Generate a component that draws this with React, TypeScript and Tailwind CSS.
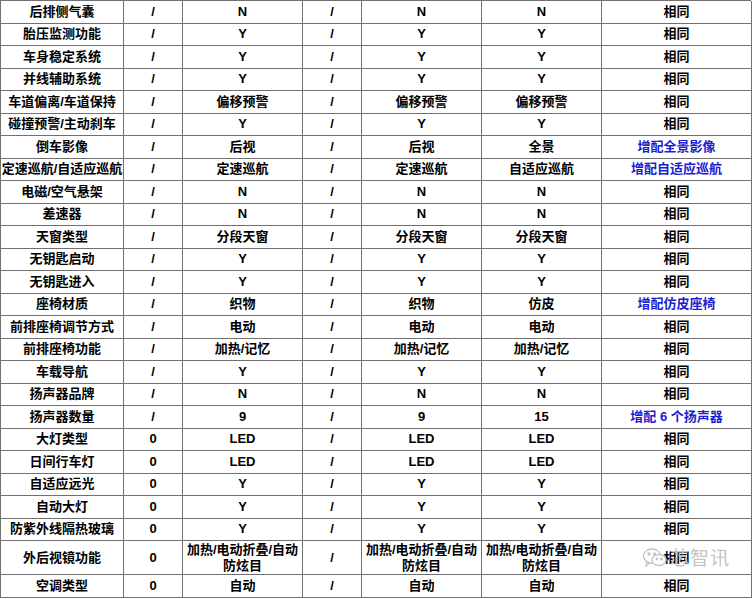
import React from "react";

type Row = {
  label: string;
  a: string;
  b: string;
  c: string;
  d: string;
  e: string;
  f: string;
  g: string;
  blue?: boolean;
  tall?: boolean;
};

const mirror = "加热/电动折叠/自动\n防炫目";

const rows: Row[] = [
  { label: "后排侧气囊", a: "/", b: "N", c: "/", d: "N", e: "N", f: "相同", g: "" },
  { label: "胎压监测功能", a: "/", b: "Y", c: "/", d: "Y", e: "Y", f: "相同", g: "" },
  { label: "车身稳定系统", a: "/", b: "Y", c: "/", d: "Y", e: "Y", f: "相同", g: "" },
  { label: "并线辅助系统", a: "/", b: "Y", c: "/", d: "Y", e: "Y", f: "相同", g: "" },
  { label: "车道偏离/车道保持", a: "/", b: "偏移预警", c: "/", d: "偏移预警", e: "偏移预警", f: "相同", g: "" },
  { label: "碰撞预警/主动刹车", a: "/", b: "Y", c: "/", d: "Y", e: "Y", f: "相同", g: "" },
  { label: "倒车影像", a: "/", b: "后视", c: "/", d: "后视", e: "全景", f: "增配全景影像", g: "", blue: true },
  { label: "定速巡航/自适应巡航", a: "/", b: "定速巡航", c: "/", d: "定速巡航", e: "自适应巡航", f: "增配自适应巡航", g: "", blue: true },
  { label: "电磁/空气悬架", a: "/", b: "N", c: "/", d: "N", e: "N", f: "相同", g: "" },
  { label: "差速器", a: "/", b: "N", c: "/", d: "N", e: "N", f: "相同", g: "" },
  { label: "天窗类型", a: "/", b: "分段天窗", c: "/", d: "分段天窗", e: "分段天窗", f: "相同", g: "" },
  { label: "无钥匙启动", a: "/", b: "Y", c: "/", d: "Y", e: "Y", f: "相同", g: "" },
  { label: "无钥匙进入", a: "/", b: "Y", c: "/", d: "Y", e: "Y", f: "相同", g: "" },
  { label: "座椅材质", a: "/", b: "织物", c: "/", d: "织物", e: "仿皮", f: "增配仿皮座椅", g: "", blue: true },
  { label: "前排座椅调节方式", a: "/", b: "电动", c: "/", d: "电动", e: "电动", f: "相同", g: "" },
  { label: "前排座椅功能", a: "/", b: "加热/记忆", c: "/", d: "加热/记忆", e: "加热/记忆", f: "相同", g: "" },
  { label: "车载导航", a: "/", b: "Y", c: "/", d: "Y", e: "Y", f: "相同", g: "" },
  { label: "扬声器品牌", a: "/", b: "N", c: "/", d: "N", e: "N", f: "相同", g: "" },
  { label: "扬声器数量", a: "/", b: "9", c: "/", d: "9", e: "15", f: "增配 6 个扬声器", g: "", blue: true },
  { label: "大灯类型", a: "0", b: "LED", c: "/", d: "LED", e: "LED", f: "相同", g: "" },
  { label: "日间行车灯", a: "0", b: "LED", c: "/", d: "LED", e: "LED", f: "相同", g: "" },
  { label: "自适应远光", a: "0", b: "Y", c: "/", d: "Y", e: "Y", f: "相同", g: "" },
  { label: "自动大灯", a: "0", b: "Y", c: "/", d: "Y", e: "Y", f: "相同", g: "" },
  { label: "防紫外线隔热玻璃", a: "0", b: "Y", c: "/", d: "Y", e: "Y", f: "相同", g: "" },
  { label: "外后视镜功能", a: "0", b: mirror, c: "/", d: mirror, e: mirror, f: "相同", g: "wm", tall: true },
  { label: "空调类型", a: "0", b: "自动", c: "/", d: "自动", e: "自动", f: "相同", g: "" },
];

const Watermark = () => (
  <div className="pointer-events-none absolute left-[40px] top-[6px] flex items-center gap-[2px] text-[#c4c4c4]">
    <svg width="26" height="22" viewBox="0 0 26 22" fill="none" stroke="#c4c4c4" strokeWidth="1.3">
      <ellipse cx="10" cy="9" rx="8.5" ry="7" />
      <path d="M5 15 L4 19 L8 16" />
      <ellipse cx="17" cy="13" rx="7" ry="5.5" fill="white" />
      <circle cx="7" cy="7" r="1" fill="#c4c4c4" />
      <circle cx="12.5" cy="7" r="1" fill="#c4c4c4" />
      <circle cx="15" cy="12" r="0.8" fill="#c4c4c4" />
      <circle cx="19.5" cy="12" r="0.8" fill="#c4c4c4" />
    </svg>
    <span className="text-[19px] font-normal leading-none tracking-[1px]">芯智讯</span>
  </div>
);

const Cell = ({ text, tall, blue, children }: { text: string; tall?: boolean; blue?: boolean; children?: React.ReactNode }) => (
  <div
    className={`relative flex items-center justify-center whitespace-pre-line border-r border-b border-[#707070] text-center leading-[16px] ${
      tall ? "h-[34px]" : "h-[22.5px]"
    } ${blue ? "text-[#1c1cd0]" : "text-black"}`}
  >
    <span className="whitespace-pre">{text}</span>
    {children}
  </div>
);

export default function App() {
  return (
    <div className="min-h-screen bg-white">
      <div
        className="grid w-[751px] grid-cols-[123px_59px_120px_59px_120px_120px_150px] border-t border-l border-[#707070] text-[13px] font-bold"
        style={{ fontFamily: '"Liberation Sans", "Noto Sans CJK SC", sans-serif' }}
      >
        {rows.map((r) => (
          <React.Fragment key={r.label}>
            <Cell text={r.label} tall={r.tall} />
            <Cell text={r.a} tall={r.tall} />
            <Cell text={r.b} tall={r.tall} />
            <Cell text={r.c} tall={r.tall} />
            <Cell text={r.d} tall={r.tall} />
            <Cell text={r.e} tall={r.tall} />
            <Cell text={r.f} tall={r.tall} blue={r.blue}>
              {r.g === "wm" && <Watermark />}
            </Cell>
          </React.Fragment>
        ))}
      </div>
    </div>
  );
}
